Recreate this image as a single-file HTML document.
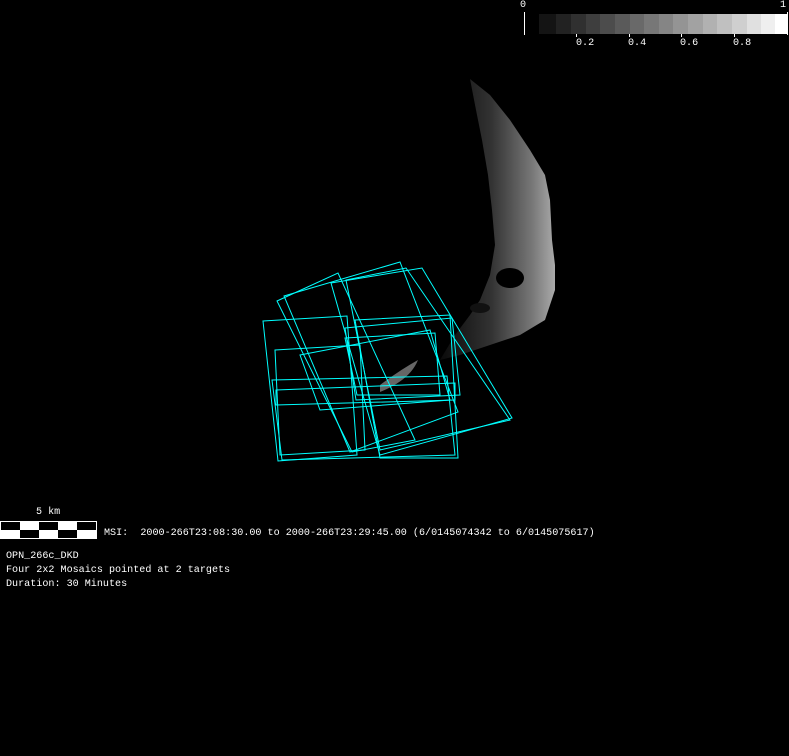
<!DOCTYPE html>
<html><head><meta charset="utf-8"><style>
html,body{margin:0;padding:0;background:#000;width:789px;height:756px;overflow:hidden}
.t{position:absolute;color:#fff;font-family:"Liberation Mono",monospace;font-size:10.1px;line-height:14px;white-space:pre}
</style></head><body>
<svg width="789" height="756" style="position:absolute;left:0;top:0">
<defs>
<linearGradient id="g" x1="0" y1="0" x2="1" y2="0">
<stop offset="0" stop-color="#0a0a0a"/><stop offset="0.45" stop-color="#333"/><stop offset="0.8" stop-color="#777"/><stop offset="1" stop-color="#aaa"/>
</linearGradient>
</defs>
<g>
<rect x="539" y="14" width="17" height="20" fill="#141414"/>
<rect x="556" y="14" width="15" height="20" fill="#222"/>
<rect x="571" y="14" width="15" height="20" fill="#303030"/>
<rect x="586" y="14" width="14" height="20" fill="#3e3e3e"/>
<rect x="600" y="14" width="15" height="20" fill="#4c4c4c"/>
<rect x="615" y="14" width="15" height="20" fill="#5a5a5a"/>
<rect x="630" y="14" width="14" height="20" fill="#696969"/>
<rect x="644" y="14" width="15" height="20" fill="#777"/>
<rect x="659" y="14" width="14" height="20" fill="#858585"/>
<rect x="673" y="14" width="15" height="20" fill="#949494"/>
<rect x="688" y="14" width="15" height="20" fill="#a2a2a2"/>
<rect x="703" y="14" width="14" height="20" fill="#b1b1b1"/>
<rect x="717" y="14" width="15" height="20" fill="#c0c0c0"/>
<rect x="732" y="14" width="15" height="20" fill="#cfcfcf"/>
<rect x="747" y="14" width="14" height="20" fill="#e0e0e0"/>
<rect x="761" y="14" width="14" height="20" fill="#efefef"/>
<rect x="775" y="14" width="13" height="20" fill="#fff"/>
</g>
<line x1="524.5" y1="12" x2="524.5" y2="35" stroke="#fff"/>
<line x1="787.5" y1="12" x2="787.5" y2="35" stroke="#fff"/>
<g stroke="#fff"><line x1="576.5" y1="34" x2="576.5" y2="37"/><line x1="629.5" y1="34" x2="629.5" y2="37"/><line x1="681.5" y1="34" x2="681.5" y2="37"/><line x1="734.5" y1="34" x2="734.5" y2="37"/></g>
<path d="M470 79 L490 95 L510 120 L530 150 L545 175 L550 200 L552 240 L555 265 L555 290 L545 320 L520 335 L490 345 L460 355 L440 360 L455 335 L470 315 L480 300 L490 275 L495 245 L492 210 L488 175 L482 140 L476 110 Z" fill="url(#g)"/>
<ellipse cx="510" cy="278" rx="14" ry="10" fill="#000"/>
<ellipse cx="480" cy="308" rx="10" ry="5" fill="#111"/>
<path d="M380 385 Q400 370 418 360 Q410 380 380 392 Z" fill="#666"/>
<g fill="none" stroke="#0ff" stroke-width="1">
<polygon points="263,321 347,316 357,455 278,461"/>
<polygon points="277,301 338,273 415,440 352,452"/>
<polygon points="284,296 400,262 458,412 350,452"/>
<polygon points="331,283 422,268 512,418 380,455"/>
<polygon points="346,280 406,268 510,420 380,450"/>
<polygon points="272,380 447,376 455,455 282,460"/>
<polygon points="276,390 455,383 455,400 276,405"/>
<polygon points="300,355 430,330 450,400 320,410"/>
<polygon points="345,328 452,318 460,395 356,400"/>
<polygon points="345,338 435,333 440,395 357,395"/>
<polygon points="275,350 360,345 365,450 280,455"/>
<polygon points="355,320 450,315 458,458 380,458"/>
</g>
<rect x="0" y="521" width="97" height="18" fill="#fff"/>
<g fill="#000">
<rect x="1" y="522" width="19" height="8"/><rect x="39" y="522" width="19" height="8"/><rect x="77" y="522" width="19" height="8"/>
<rect x="20" y="530" width="19" height="8"/><rect x="58" y="530" width="19" height="8"/>
</g>
</svg>
<div class="t" style="left:520px;top:-1px">0</div>
<div class="t" style="left:780px;top:-1px">1</div>
<div class="t" style="left:576px;top:37px">0.2</div>
<div class="t" style="left:628px;top:37px">0.4</div>
<div class="t" style="left:680px;top:37px">0.6</div>
<div class="t" style="left:733px;top:37px">0.8</div>
<div class="t" style="left:36px;top:506px">5 km</div>
<div class="t" style="left:104px;top:527px">MSI:  2000-266T23:08:30.00 to 2000-266T23:29:45.00 (6/0145074342 to 6/0145075617)</div>
<div class="t" style="left:6px;top:550px">OPN_266c_DKD
Four 2x2 Mosaics pointed at 2 targets
Duration: 30 Minutes</div>
</body></html>
